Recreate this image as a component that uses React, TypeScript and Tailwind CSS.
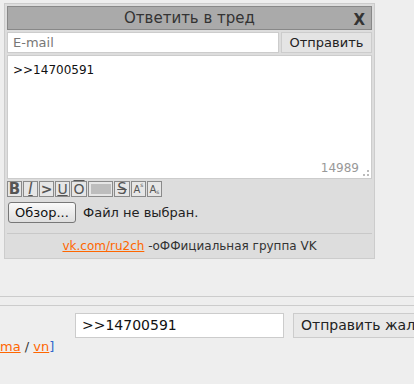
import React from "react";

const font = { fontFamily: '"DejaVu Sans", Verdana, sans-serif' };

function TB({ children, w = 15, cls = "" }: { children?: React.ReactNode; w?: number; cls?: string }) {
  return (
    <div
      className={`shrink-0 h-[16px] border border-[#8a8a8a] bg-[#e6e6e6] flex items-center justify-center leading-none text-[#555] ${cls}`}
      style={{ width: w }}
    >
      {children}
    </div>
  );
}

export default function App() {
  return (
    <div className="w-[414px] h-[384px] overflow-hidden bg-[#eeeeee] pt-[3px]" style={font}>
      <div className="ml-[4px] w-[371px] border border-[#cccccc] bg-[#dddddd] p-[2px]">
        <div className="h-[24px] bg-[#aaaaaa] border border-[#888888] flex items-center relative">
          <div className="flex-1 text-center text-[15px] text-[#333]">Ответить в тред</div>
          <div className="absolute right-[6px] top-[2px] text-[15px] font-bold text-[#333]">X</div>
        </div>
        <div className="mt-[2px] flex gap-[2px] h-[21px]">
          <div className="w-[272px] bg-white border border-[#cccccc] flex items-center pl-[5px] text-[13px] text-[#777]">E-mail</div>
          <div className="flex-1 bg-[#e4e4e4] border border-[#cccccc] flex items-center justify-center text-[13px] text-[#222]">Отправить</div>
        </div>
        <div className="mt-[2px] h-[124px] bg-white border border-[#cccccc] relative">
          <div className="pl-[5px] pt-[5px] text-[12px] text-[#111]">&gt;&gt;14700591</div>
          <div className="absolute right-[12px] bottom-[1px] text-[12px] text-[#999]">14989</div>
          <div className="absolute right-[2px] bottom-[2px] w-[6px] h-[6px] border-r-2 border-b-2 border-dotted border-[#bbb]"></div>
        </div>
        <div className="mt-[2px] flex gap-[1px] h-[16px]">
          <TB cls="font-bold text-[15px]">B</TB>
          <TB cls="italic text-[15px] underline">I</TB>
          <TB cls="text-[#6a9a1f] font-bold text-[14px]">&gt;</TB>
          <TB cls="underline text-[14px]">U</TB>
          <TB w={16} cls="overline text-[14px]">O</TB>
          <TB w={25}><div className="w-[20px] h-[10px] bg-[#bdbdbd]"></div></TB>
          <TB w={16} cls="line-through text-[15px]">S</TB>
          <TB cls="text-[10px] items-end pb-[1px]">A<span className="text-[6px] self-start">s</span></TB>
          <TB cls="text-[10px] items-end pb-[1px]">A<span className="text-[6px]">s</span></TB>
        </div>
        <div className="mt-[5px] flex items-center gap-[7px] pl-[1px]">
          <div className="w-[68px] h-[21px] rounded-[3px] border border-[#777] bg-gradient-to-b from-[#fafafa] to-[#dedede] flex items-center justify-center text-[13px] text-[#111]">Обзор...</div>
          <div className="text-[13px] text-[#222]">Файл не выбран.</div>
        </div>
        <div className="mt-[10px] border-t border-[#c8c8c8] h-[23px] flex items-center justify-center pt-[2px] text-[12px] text-[#333]">
          <span className="text-[#ff6600] underline">vk.com/ru2ch</span>
          <span>&nbsp;-оФФициальная группа VK</span>
        </div>
      </div>
      <div className="mt-[37px] border-t border-[#cccccc]"></div>
      <div className="mt-[8px] border-t border-[#cccccc]"></div>
      <div className="mt-[7px] flex items-start">
        <div className="shrink-0 w-[75px] pt-[26px] text-[13px] text-[#333] leading-[16px] whitespace-nowrap">
          <span className="text-[#ff6600] underline">ma</span>
          <span> / </span>
          <span className="text-[#ff6600] underline">vn</span>
          <span className="text-[#3366cc]">]</span>
        </div>
        <div className="shrink-0 w-[209px] h-[25px] bg-white border border-[#cccccc] flex items-center pl-[6px] text-[14px] text-[#111]">&gt;&gt;14700591</div>
        <div className="shrink-0 ml-[9px] h-[25px] bg-[#e8e8e8] border border-[#cccccc] flex items-center pl-[7px] pr-[8px] text-[14px] text-[#222] whitespace-nowrap">Отправить жалобу</div>
      </div>
    </div>
  );
}
